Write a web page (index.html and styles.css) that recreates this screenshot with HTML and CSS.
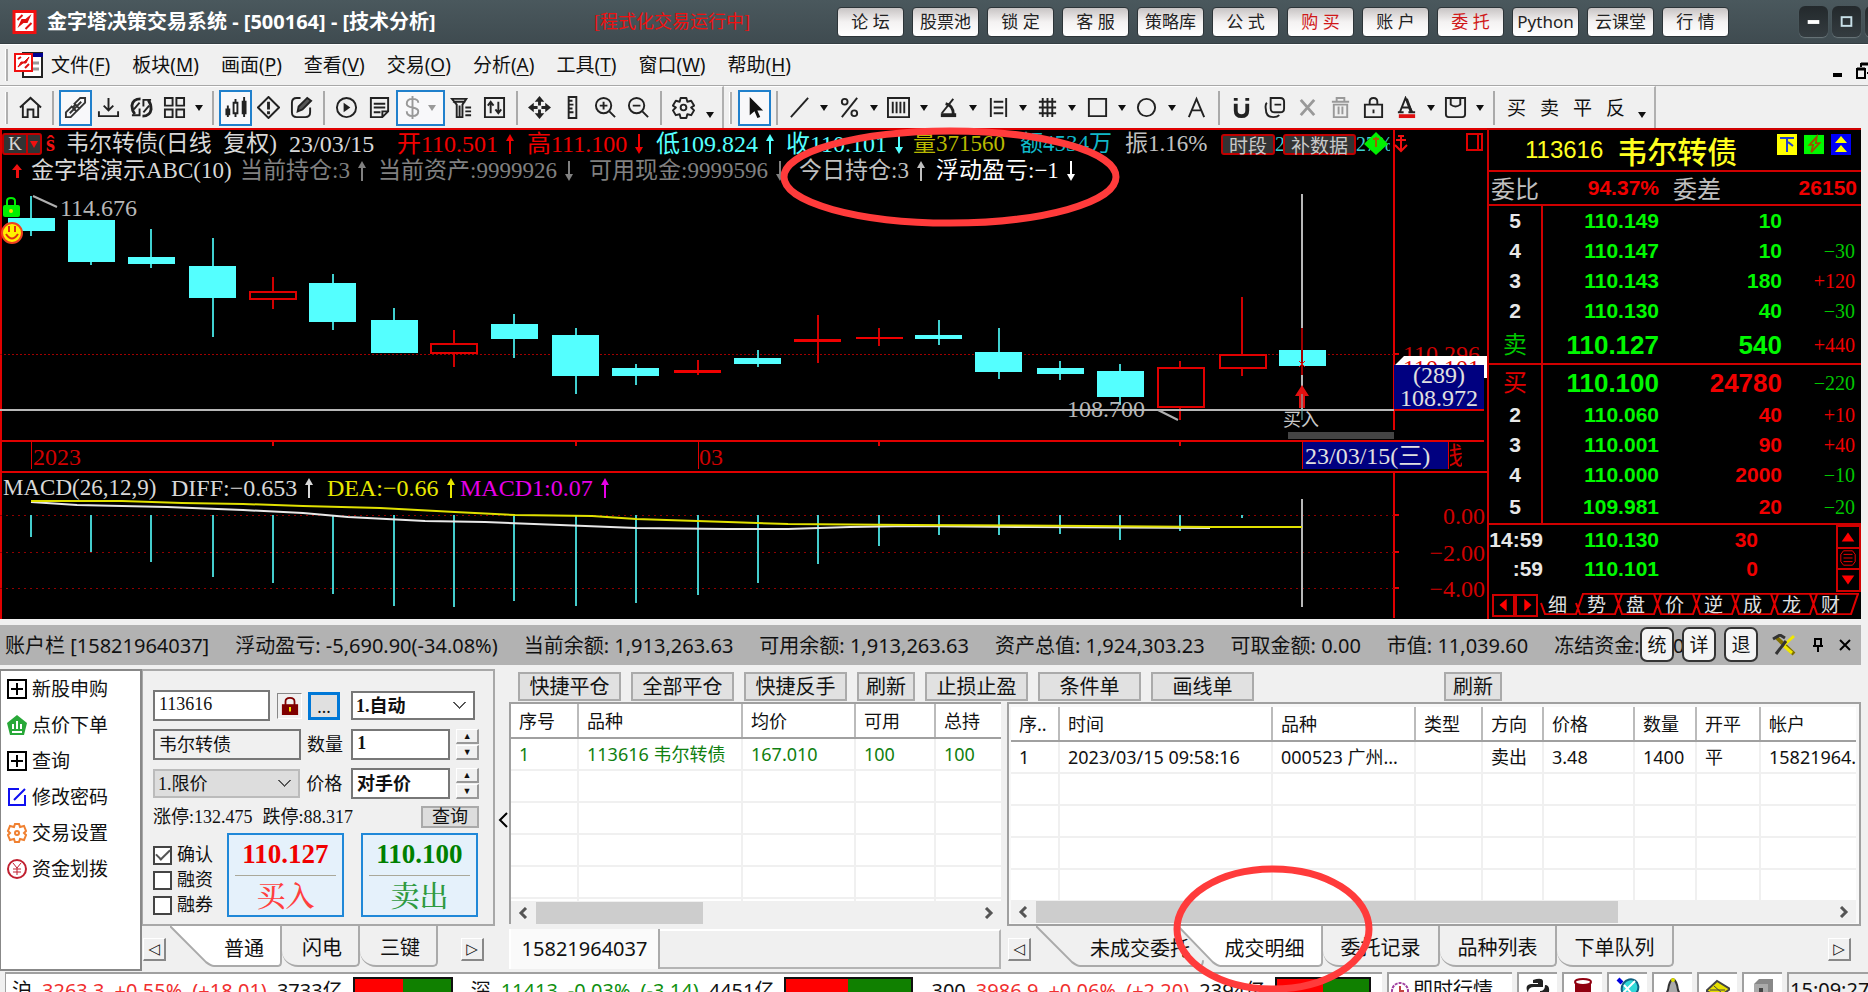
FILE: index.html
```html
<!DOCTYPE html>
<html lang="zh-CN">
<head>
<meta charset="utf-8">
<title>金字塔决策交易系统</title>
<link rel="stylesheet" href="styles.css">
</head>
<body>
<header class="titlebar">
  <svg class="logo" viewBox="0 0 24 24"><rect width="24" height="24" fill="#f01010"/><rect x="3" y="3" width="18" height="18" fill="#fff"/><path d="M5 18l4-9h4l6-5-4 9h-4z" fill="#e01010"/><path d="M5 10l5-5M13 19l6-6" stroke="#e01010" stroke-width="2"/></svg>
  <h1>金字塔决策交易系统 - [500164] - [技术分析]</h1>
  <span class="running">[程式化交易运行中]</span>
  <nav class="quick">
    <button>论 坛</button><button>股票池</button><button>锁 定</button><button>客 服</button><button>策略库</button><button>公 式</button><button class="hot">购 买</button><button>账 户</button><button class="hot">委 托</button><button>Python</button><button>云课堂</button><button>行 情</button>
  </nav>
  <div class="winctl">
    <button aria-label="最小化"><svg viewBox="0 0 30 30"><path d="M9 15h12" stroke="#fff" stroke-width="4"/></svg></button>
    <button aria-label="最大化"><svg viewBox="0 0 30 30"><rect x="10" y="10" width="10" height="9" fill="none" stroke="#c8e0e8" stroke-width="2"/></svg></button>
    <button aria-label="关闭"></button>
  </div>
</header>

<nav class="menubar">
  <i class="grip"></i>
  <svg class="docicon" viewBox="0 0 30 28"><rect x="9" y="2" width="19" height="24" fill="#fff" stroke="#222" stroke-width="2"/><path d="M8 2h21v4H8z" fill="#000090"/><path d="M19 12h6m-6 6h6" stroke="#999" stroke-width="3"/><rect x="1" y="3" width="17" height="17" fill="#fff" stroke="#f01010" stroke-width="2"/><path d="M4 16l3-5h3l5-5-3 6H9z" fill="#e01010" stroke="#e01010"/><path d="M4 8l3-2M11 17l4-4" stroke="#e01010" stroke-width="2"/></svg>
  <a href="#">文件(<u>F</u>)</a><a href="#">板块(<u>M</u>)</a><a href="#">画面(<u>P</u>)</a><a href="#">查看(<u>V</u>)</a><a href="#">交易(<u>O</u>)</a><a href="#">分析(<u>A</u>)</a><a href="#">工具(<u>T</u>)</a><a href="#">窗口(<u>W</u>)</a><a href="#">帮助(<u>H</u>)</a>
  <svg class="mdi" viewBox="0 0 36 20"><path d="M1 14h9" stroke="#000" stroke-width="4"/><g fill="none" stroke="#000" stroke-width="2"><path d="M29 6V3h8v9h-2M25 8h8v9h-8z"/><path d="M29 3h8M25 8h8" stroke-width="3"/></g></svg>
</nav>

<div class="toolbar">
  <div class="tgroup">
    <i class="grip"></i>
    <button aria-label="主页"><svg viewBox="0 0 24 24"><path d="M1 12L12 2l11 10M4 10v12h5v-8h6v8h5V10"/></svg></button>
    <i class="sep"></i>
    <button class="on" aria-label="连接"><svg viewBox="0 0 24 24"><path d="M2 22v-5l6-6 5 5-6 6zM11 8l6-6h5v5l-6 6zM6 18L18 6M9 12l3-3 4 4-3 3" stroke="#333"/></svg></button>
    <button aria-label="下载"><svg viewBox="0 0 24 24"><path d="M12 2v13M7 10l5 5 5-5M2 16v5h20v-5"/></svg></button>
    <button aria-label="刷新"><svg viewBox="0 0 24 24"><path d="M11 3Q3 3 2 10q0 5 3 9M13 21q8 0 9-7 0-6-3-10" stroke-width="3"/><path d="M2 20h8v-7M22 4h-8v7M10 7L4 14M14 17l6-7"/></svg></button>
    <button aria-label="布局"><svg viewBox="0 0 24 24"><path d="M2 2h8v8H2zM14 2h8v8h-8zM2 14h8v8H2zM14 14h8v8h-8z"/></svg></button>
    <i class="caret"></i>
    <i class="sep"></i>
    <button class="on" aria-label="K线"><svg viewBox="0 0 24 24"><path d="M4 10v12M12 3v19M21 1v21"/><path d="M4 13v7M21 5v14" stroke-width="5"/><path d="M10 7h4v11h-4z" fill="#fff"/></svg></button>
    <button aria-label="预警"><svg viewBox="0 0 24 24"><path d="M12 1l11 11-11 11L1 12z"/><path d="M12 6v8M12 16v3" stroke-width="3"/></svg></button>
    <button aria-label="编辑"><svg viewBox="0 0 24 24"><path d="M11 2H7Q2 2 2 7v10q0 5 5 5h9q5 0 5-5v-5"/><path d="M8 16l1-5 9-9 4 3-9 9z" fill="#555" stroke-width="2"/></svg></button>
    <i class="sep"></i>
    <button aria-label="播放"><svg viewBox="0 0 24 24"><circle cx="12" cy="12" r="10"/><path d="M9 7l7 5-7 5z" fill="#222" stroke="none"/></svg></button>
    <button aria-label="笔记"><svg viewBox="0 0 24 24"><path d="M3 2h18v14l-6 6H3zM21 16h-6v6M6 8h12M6 12h12M6 17h7"/></svg></button>
    <button class="on wide" aria-label="资金"><svg viewBox="0 0 24 24"><path d="M18 7q0-4-6-4T6 8q0 3 6 4t6 4q0 5-6 5t-6-5M12 0v24" stroke="#999"/></svg><i class="caret dim"></i></button>
    <button aria-label="筛选"><svg viewBox="0 0 24 24"><path d="M2 3h15l-4 6v13H7V9zM3 6h13M10 10v11M16 12h6M16 16h6M16 20h6"/></svg></button>
    <button aria-label="排序"><svg viewBox="0 0 24 24"><path d="M2 2h20v20H2zM8 18V7M5 10l3-4 3 4M16 6v11M13 14l3 4 3-4"/></svg></button>
    <i class="sep"></i>
    <button aria-label="移动"><svg viewBox="0 0 24 24"><path d="M12 0l5 6H7zM12 24l5-6H7zM0 12l6-5v10zM24 12l-6-5v10z" fill="#222" stroke="none"/><path d="M12 5v5M12 14v5M5 12h5M14 12h5" stroke-width="3"/></svg></button>
    <button aria-label="标尺"><svg viewBox="0 0 24 24"><path d="M8 1h8v22H8zM8 5h4M8 9h5M8 13h4M8 17h5"/></svg></button>
    <button aria-label="放大"><svg viewBox="0 0 24 24"><circle cx="10" cy="10" r="8"/><path d="M6 10h8M10 6v8M16 16l6 6"/></svg></button>
    <button aria-label="缩小"><svg viewBox="0 0 24 24"><circle cx="10" cy="10" r="8"/><path d="M6 10h8M16 16l6 6"/></svg></button>
    <i class="sep"></i>
    <button aria-label="设置"><svg viewBox="0 0 24 24"><path d="M9 2h6l1 4 4-1 3 5-3 2 3 3-3 5-4-1-1 4H9l-1-4-4 1-3-5 3-3-3-2 3-5 4 1z" stroke-linejoin="round"/><circle cx="12" cy="12" r="3"/></svg></button>
    <i class="caret low"></i>
  </div>
  <div class="tgroup">
    <i class="grip"></i>
    <button class="on" aria-label="选择"><svg viewBox="0 0 24 24"><path d="M7 1v19l5-4 3 7 3-1-3-7h6z" fill="#111" stroke="none"/></svg></button>
    <i class="sep"></i>
    <div class="draw">
      <button aria-label="直线"><svg viewBox="0 0 24 24"><path d="M3 22L21 2"/></svg></button><i class="caret"></i>
      <button aria-label="百分比"><svg viewBox="0 0 24 24"><path d="M4 22L20 2"/><circle cx="7" cy="6" r="3"/><circle cx="17" cy="18" r="3"/></svg></button><i class="caret"></i>
      <button aria-label="区间"><svg viewBox="0 0 24 24"><path d="M1 2h22v20H1zM6 6v12M10 6v12M14 6v12M18 6v12"/></svg></button><i class="caret"></i>
      <button aria-label="角度"><svg viewBox="0 0 24 24"><path d="M5 18L17 3" /><path d="M4 20h16" stroke-width="4"/><path d="M9 8q8 2 8 11" stroke-width="3"/></svg></button><i class="caret"></i>
      <button aria-label="通道"><svg viewBox="0 0 24 24"><path d="M4 2v20M20 2v20M7 6h10M7 12h10M7 18h10"/></svg></button><i class="caret"></i>
      <button aria-label="网格"><svg viewBox="0 0 24 24"><path d="M7 2v20M12 2v20M17 2v20M3 6h18M3 12h18M3 18h18"/></svg></button><i class="caret"></i>
      <button aria-label="矩形"><svg viewBox="0 0 24 24"><path d="M3 3h18v18H3z"/></svg></button><i class="caret"></i>
      <button aria-label="圆形"><svg viewBox="0 0 24 24"><circle cx="12" cy="12" r="9"/></svg></button><i class="caret"></i>
      <button aria-label="文字"><svg viewBox="0 0 24 24"><path d="M4 22L12 3l8 19M7 15h10"/></svg></button>
    </div>
    <i class="sep"></i>
    <button aria-label="磁铁"><svg viewBox="0 0 24 24"><path d="M6 8v7q0 6 6 6t6-6V8M6 2v3M18 2v3" stroke-width="4"/></svg></button>
    <button aria-label="复制"><svg viewBox="0 0 24 24"><path d="M8 2h10q4 0 4 4v7q0 4-4 4h-6q-4 0-4-4zM4 7Q2 9 3 14q0 8 8 8 4 0 6-2M12 9h7"/></svg></button>
    <button aria-label="删除"><svg viewBox="0 0 24 24"><path d="M5 4l14 16M19 4L5 20" stroke="#999" stroke-width="3"/></svg></button>
    <button aria-label="清空"><svg viewBox="0 0 24 24"><path d="M3 6h18M8 5V2h8v3M5 9h14v13H5zM10 11v8M14 11v8" stroke="#999"/></svg></button>
    <button aria-label="锁定"><svg viewBox="0 0 24 24"><path d="M3 9h18v13H3zM8 9V6q0-4 4-4t4 4v3M12 14v4"/></svg></button>
    <button aria-label="字体颜色"><svg viewBox="0 0 24 24"><path d="M5 17L11 2l7 15M7 12h8M3 17h6M14 17h7" /><path d="M12 3l5 14" stroke-width="3"/><path d="M4 21h17" stroke="#e01010" stroke-width="4"/></svg></button>
    <i class="caret"></i>
    <button aria-label="保存"><svg viewBox="0 0 24 24"><path d="M2 2h20v17q0 3-3 3H5q-3 0-3-3zM7 2v7q5 4 10 0V2"/></svg></button>
    <i class="caret"></i>
    <i class="sep"></i>
    <button>买</button><button>卖</button><button>平</button><button>反</button>
    <i class="caret low"></i>
  </div>
</div>

<main class="work">
  <section class="chart">
    <svg class="plot" height="491">
      <g transform="translate(0 -128)" shape-rendering="crispEdges">
        <path d="M0 129h1488M1 129v490M0 441h1484M0 472h1488" stroke="#e00000" stroke-width="2" fill="none"/>
        <path d="M1394 129v301M1394 472v146" stroke="#e00000" stroke-width="2"/>
        <path d="M0 354h1394" stroke="#a00000" stroke-width="1" stroke-dasharray="2 2"/>
        <path d="M0 515h1394M0 552h1394M0 588h1394" stroke="#900000" stroke-width="1" stroke-dasharray="2 4"/>
        <path d="M1394 515h5M1394 552h5M1394 588h5M1394 354h5M273 441v5M576 441v5M879 441v5M1180 441v5" stroke="#e00000" stroke-width="2"/>
        <path d="M31 441v28M698 441v28M1302 441v28" stroke="#e00000" stroke-width="1"/>
        <path d="M31 196v40M91 220v45M151 229v39M213 238v99M333 274v56M394 308v45M514 314v44M576 328v66M636 364v21M758 350v17M939 320v25M999 328v51M1060 361v19M1120 364v41" stroke="#40d0d0" stroke-width="2"/>
        <path d="M273 277v14m0 8v10M454 330v13m0 10v14M698 360v15M818 315v48M879 328v18M1180 361v6m0 40v13M1242 297v57m0 15v7" stroke="#d00000" stroke-width="2"/>
        <path d="M8 218h47v13H8zM68 220h47v42H68zM128 257h47v7h-47zM189 266h47v32h-47zM309 283h47v39h-47zM371 320h47v33h-47zM491 324h47v15h-47zM552 335h47v41h-47zM612 368h47v8h-47zM734 358h47v6h-47zM915 335h47v4h-47zM975 352h47v20h-47zM1037 368h47v6h-47zM1097 371h47v26h-47zM1279 350h47v16h-47z" fill="#54ffff"/>
        <path d="M674 370h47v3h-47zM794 339h47v3h-47zM856 337h47v2h-47z" fill="#f00000"/>
        <path d="M250 292h46v7h-46zM431 344h46v9h-46zM1158 368h46v39h-46zM1220 355h46v13h-46z" fill="none" stroke="#e00000" stroke-width="2"/>
        <path d="M0 410h1394" stroke="#b8b8b8" stroke-width="2"/>
        <path d="M1302 194v216M1302 499v108" stroke="#b8b8b8" stroke-width="2"/>
        <path d="M1302 328v47" stroke="#a00000" stroke-width="2"/>
        <path d="M31 515v22M91 515v37M151 515v47M213 515v62M273 515v68M333 515v79M394 515v91M454 515v92M514 515v86M576 515v91M636 515v88M698 515v80M758 515v68M818 515v49M879 515v31M939 515v20M999 515v20M1060 515v19M1120 515v25M1180 515v16M1242 515v3" stroke="#44cccc" stroke-width="2"/>
        <rect x="1288" y="432" width="106" height="7" fill="#444"/>
        <rect x="1303" y="442" width="145" height="27" fill="#000080"/>
        <path d="M1448 442v27" stroke="#e00000"/>
      </g>
      <g transform="translate(0 -128)">
        <path d="M31 502L77 505 167 507 243 510 303 513 348 517 425 521 485 522 560 525 636 528 728 529 788 529 850 527 910 526 1030 527 1210 528" fill="none" stroke="#e8e8e8" stroke-width="2"/>
        <path d="M31 501H122L182 503 243 504 303 506 380 508 455 512 515 515 592 516 636 519 728 522 788 524 910 525 1090 526 1211 527H1302" fill="none" stroke="#e0e000" stroke-width="2"/>
        <path d="M33 196l24 11M1158 410l20 10" stroke="#b0b0b0" stroke-width="2"/>
        <path d="M1302 385l7 11h-4v12h-6v-12h-4z" fill="#e01010"/><path d="M1302 394v26" stroke="#70c8c8" stroke-width="1"/>
        <path d="M1299 361l6 6m0-6l-6 6" stroke="#e01010"/>
        <rect x="3" y="205" width="17" height="12" rx="2" fill="#00f000"/><path d="M7 206v-5q0-3 4-3t4 3v5" fill="none" stroke="#00f000" stroke-width="2"/><circle cx="11" cy="211" r="2" fill="#f0e000"/>
        <circle cx="12" cy="233" r="10" fill="#fff000" stroke="#f04020" stroke-width="2"/><path d="M9 226v6M15 226v6M6 234q6 9 12 0" fill="none" stroke="#e03010" stroke-width="2"/>
        <g class="svgtext">
          <text x="60" y="216" fill="#b8b8b8">114.676</text>
          <text x="1067" y="417" fill="#b8b8b8">108.700</text>
          <text x="33" y="465" fill="#d00000">2023</text>
          <text x="699" y="465" fill="#d00000">03</text>
          <text x="1485" y="524" text-anchor="end" fill="#d00000">0.00</text>
          <text x="1485" y="561" text-anchor="end" fill="#d00000">−2.00</text>
          <text x="1485" y="597" text-anchor="end" fill="#d00000">−4.00</text>
          <text x="1403" y="362" fill="#d00000">110.296</text>
        </g>
        <path d="M1394 366l10-10h84v22h-4v-12z" fill="#fff"/>
        <svg x="1394" y="356" width="94" height="9"><text class="axis" x="9" y="20" fill="#e00000">110.101</text></svg>
        <rect x="1394" y="365" width="90" height="44" fill="#000080"/>
        <path d="M1394 410h90" stroke="#e00000" stroke-width="2"/>
        <g class="svgtext">
          <text x="1439" y="383" text-anchor="middle" fill="#e0e0e0">(289)</text>
          <text x="1439" y="406" text-anchor="middle" fill="#e0e0e0">108.972</text>
          <text x="1305" y="464" fill="#e0e0e0">23/03/15(三)</text>
        </g>
        <text class="tag" x="1283" y="426" fill="#c8c8c8">买入</text>
        <svg x="1450" y="442" width="12" height="28"><text class="axis" x="-11" y="22" fill="#d00000">线</text></svg>
        <path d="M1467 134h15v16h-15zM1478 134v16" fill="none" stroke="#e00000" stroke-width="2"/>
      </g>
    </svg>
    <div class="line one">
      <span class="kbox"><b>K</b><i></i></span><span class="scale">ŝ</span>
      <span>韦尔转债(日线&nbsp; 复权)</span><span class="n">23/03/15</span>
      <span class="n r">开110.501<svg class="ar"><use href="#up"/></svg></span>
      <span class="n r">高111.100<svg class="ar"><use href="#dn"/></svg></span>
      <span class="n c">低109.824<svg class="ar"><use href="#up"/></svg></span>
      <span class="n c">收110.101<svg class="ar"><use href="#dn"/></svg></span>
      <span class="y">量371560</span><span class="t">额4534万</span><span class="g">振1.16%</span>
      <span class="btns"><button>时段</button><small>2</small><button>补数据</button><small>27%</small></span>
    </div>
    <div class="line two">
      <svg class="redup" viewBox="0 0 12 16"><path d="M6 1l5 6H8v8H5V7H1z" fill="#f01010"/></svg>
      <span>金字塔演示ABC(10)</span>
      <span class="d">当前持仓:3<svg class="ar"><use href="#up"/></svg></span>
      <span class="d">当前资产:9999926<svg class="ar"><use href="#dn"/></svg></span>
      <span class="d">可用现金:9999596<svg class="ar"><use href="#dn"/></svg></span>
      <span class="g">今日持仓:3<svg class="ar"><use href="#up"/></svg></span>
      <span class="w">浮动盈亏:−1<svg class="ar"><use href="#dn"/></svg></span>
    </div>
    <div class="line three">
      <span>MACD(26,12,9)</span>
      <span class="n">DIFF:−0.653<svg class="ar"><use href="#up"/></svg></span>
      <span class="n yy">DEA:−0.66<svg class="ar"><use href="#up"/></svg></span>
      <span class="n m">MACD1:0.07<svg class="ar"><use href="#up"/></svg></span>
    </div>
    <svg class="marks" viewBox="0 0 50 24"><path d="M15 1l12 12-12 11L3 13z" fill="#00f000"/><path d="M15 6v10M12 8h6" stroke="#a06000" stroke-width="2"/><path d="M40 5v14M34 14l6 6 6-6M35 9h10M37 5h6" fill="none" stroke="#f01010" stroke-width="2"/></svg>
    <svg class="defs"><defs>
      <symbol id="up" viewBox="0 0 9 20"><path d="M5 3v17" stroke="currentColor" stroke-width="2"/><path d="M5 0l4 7H1z" fill="currentColor"/></symbol>
      <symbol id="dn" viewBox="0 0 9 20"><path d="M5 0v17" stroke="currentColor" stroke-width="2"/><path d="M5 20l4-7H1z" fill="currentColor"/></symbol>
    </defs></svg>
  </section>

  <section class="quote">
    <div class="qhead"><span class="code">113616</span><span class="name">韦尔转债</span>
      <span class="flags"><svg viewBox="0 0 20 21"><rect width="20" height="21" fill="#ff0"/><path d="M3 4h14M10 4v14M11 8l5 4" stroke="#2040d0" stroke-width="2"/></svg><svg viewBox="0 0 22 21"><rect width="22" height="21" fill="#00f800"/><path d="M14 2L6 11h4l-2 8 9-10h-4z" fill="none" stroke="#a05000" stroke-width="2"/></svg><svg viewBox="0 0 20 21"><rect width="20" height="21" fill="#0000f8"/><path d="M10 2l6 7H4zM10 11l6 7H4z" fill="#ff0"/></svg></span>
    </div>
    <div class="qratio"><span>委比</span><b>94.37%</b><span>委差</span><b>26150</b></div>
    <table class="book">
      <tr><th>5</th><td>110.149</td><td>10</td><td></td></tr>
      <tr><th>4</th><td>110.147</td><td>10</td><td>−30</td></tr>
      <tr><th>3</th><td>110.143</td><td>180</td><td class="r">+120</td></tr>
      <tr><th>2</th><td>110.130</td><td>40</td><td>−30</td></tr>
      <tr class="big ask"><th>卖</th><td>110.127</td><td>540</td><td class="r">+440</td></tr>
      <tr class="big bid"><th>买</th><td>110.100</td><td class="r">24780</td><td>−220</td></tr>
      <tr><th>2</th><td>110.060</td><td class="r">40</td><td class="r">+10</td></tr>
      <tr><th>3</th><td>110.001</td><td class="r">90</td><td class="r">+40</td></tr>
      <tr><th>4</th><td>110.000</td><td class="r">2000</td><td>−10</td></tr>
      <tr class="last"><th>5</th><td>109.981</td><td class="r">20</td><td>−20</td></tr>
    </table>
    <div class="ticks">
      <table><tr><th>14:59</th><td>110.130</td><td class="r">30</td></tr><tr><th>:59</th><td>110.101</td><td class="r">0</td></tr></table>
      <div class="vscroll"><button aria-label="上"><svg viewBox="0 0 22 20"><path d="M11 5l7 10H4z"/></svg></button><button aria-label="滑块"><svg viewBox="0 0 22 20"><path d="M6 6h10M6 10h10M6 14h10M3 6l3-4h10l3 4v8l-3 4H6l-3-4z" fill="none" stroke="#f00" stroke-width="1"/></svg></button><button aria-label="下"><svg viewBox="0 0 22 20"><path d="M11 15l7-10H4z"/></svg></button></div>
    </div>
    <div class="qtabs">
      <svg class="zig" viewBox="0 0 320 26" preserveAspectRatio="none"><path d="M2 12l4 12h31l7-22h276M37 12l4 12h35l7-22M76 2l7 22h32l7-22M115 2l7 22h32l7-22M154 2l7 22h32l7-22M193 2l7 22h32l7-22M232 2l7 22h32l7-22M271 2l7 22h34l7-22" fill="none" stroke="#e00000" stroke-width="2"/></svg>
      <span class="arrows"><button aria-label="左移"><svg viewBox="0 0 20 20"><path d="M13 3v14l-8-7z"/></svg></button><button aria-label="右移"><svg viewBox="0 0 20 20"><path d="M7 3v14l8-7z"/></svg></button></span>
      <a href="#">细</a><a href="#">势</a><a href="#">盘</a><a href="#">价</a><a href="#">逆</a><a href="#">成</a><a href="#">龙</a><a href="#">财</a>
    </div>
  </section>
  <svg class="ring first" viewBox="0 0 341 101"><ellipse cx="170" cy="50" rx="166" ry="46"/></svg>
</main>

<section class="account">
  <span>账户栏 [15821964037]</span><span>浮动盈亏: -5,690.90(-34.08%)</span><span>当前余额: 1,913,263.63</span><span>可用余额: 1,913,263.63</span><span>资产总值: 1,924,303.23</span><span>可取金额: 0.00</span><span>市值: 11,039.60</span><span class="frozen">冻结资金: 0.00</span>
  <div class="abtns"><button>统</button><button>详</button><button>退</button>
    <svg class="tools" viewBox="0 0 26 22"><path d="M4 3L22 20" stroke="#807000" stroke-width="4"/><path d="M12 11L22 2M12 12l8 7" stroke="#f0e800" stroke-width="3"/><path d="M1 5l7-4 5 3M4 20L14 7" stroke="#333" stroke-width="3" fill="none"/></svg>
    <svg class="pin" viewBox="0 0 12 16"><path d="M3 2h6v7H3zM1 9h10M6 9v6" fill="none" stroke="#000" stroke-width="2"/></svg>
    <svg class="close" viewBox="0 0 14 14"><path d="M2 2l10 10M12 2L2 12" stroke="#000" stroke-width="2"/></svg>
  </div>
</section>

<section class="trade">
  <ul class="tree">
    <li><svg viewBox="0 0 20 20"><path d="M1 1h18v18H1zM4 10h12M10 4v12" fill="none" stroke="#000" stroke-width="2"/></svg>新股申购</li>
    <li><svg viewBox="0 0 20 20"><path d="M10 0l10 8-3 12H3L0 8z" fill="#28a838"/><path d="M6 9v5M10 6v8M14 9v5M5 17h10" stroke="#fff" stroke-width="2"/></svg>点价下单</li>
    <li><svg viewBox="0 0 20 20"><path d="M1 1h18v18H1zM4 10h12M10 4v12" fill="none" stroke="#000" stroke-width="2"/></svg>查询</li>
    <li><svg viewBox="0 0 20 20"><path d="M12 2H2v16h16V8M7 13L18 2" fill="none" stroke="#1010f0" stroke-width="2"/></svg>修改密码</li>
    <li><svg viewBox="0 0 20 20"><path d="M8 1h4l1 3 4-1 2 5-2 2 2 2-2 5-4-1-1 3H8l-1-3-4 1-2-5 2-2-2-2 2-5 4 1z" fill="none" stroke="#f08030" stroke-width="2"/><circle cx="10" cy="10" r="2" fill="none" stroke="#f08030" stroke-width="2"/></svg>交易设置</li>
    <li><svg viewBox="0 0 20 20"><g fill="none" stroke="#c02030"><circle cx="10" cy="10" r="9" stroke-width="2"/><path d="M6 4l4 5 4-5M10 9v7M6 10h8M6 13h8"/></g></svg>资金划拨</li>
  </ul>

  <div class="entry">
    <form class="form" onsubmit="return false">
      <div class="frow"><input class="code" value="113616" aria-label="代码"><button class="lock" aria-label="锁定"><svg viewBox="0 0 20 22"><path d="M5 10V6q0-4 5-4t5 4v4" fill="none" stroke="#800000" stroke-width="2"/><rect x="1" y="9" width="18" height="12" fill="#800000"/><path d="M10 12v5" stroke="#ff0" stroke-width="2"/></svg></button><button class="dots">...</button><select class="auto bold" aria-label="开平"><option>1.自动</option></select></div>
      <div class="frow"><input class="name" value="韦尔转债" readonly aria-label="名称"><label for="qty">数量</label><input id="qty" class="qty bold" value="1"><span class="spin"><button aria-label="增加">▲</button><button aria-label="减少">▼</button></span></div>
      <div class="frow"><select class="kind" aria-label="方式"><option>1.限价</option></select><label for="price">价格</label><input id="price" class="qty bold" value="对手价"><span class="spin"><button aria-label="提高">▲</button><button aria-label="降低">▼</button></span></div>
      <div class="frow limit"><span>涨停:132.475</span><span>跌停:88.317</span><button>查询</button></div>
      <div class="act">
        <div class="checks"><label><input type="checkbox" checked>确认</label><label><input type="checkbox">融资</label><label><input type="checkbox">融券</label></div>
        <button class="order buy"><b>110.127</b><span>买入</span></button>
        <button class="order sell"><b>110.100</b><span>卖出</span></button>
      </div>
    </form>
    <div class="tabs left">
      <button class="nav">◁</button>
      <button class="tab cur slant"><svg viewBox="0 0 112 42" preserveAspectRatio="none"><path d="M0 0l36 37q5 4 8 4h64q3 0 3-4V0"/></svg><span>普通</span></button><button class="tab"><span>闪电</span></button><button class="tab"><span>三键</span></button>
      <button class="nav end">▷</button>
    </div>
  </div>

  <button class="fold" aria-label="收起"><svg viewBox="0 0 10 16"><path d="M9 1L2 8l7 7" fill="none" stroke="#000" stroke-width="2"/></svg></button>

  <div class="lists">
    <div class="cmds"><button>快捷平仓</button><button>全部平仓</button><button>快捷反手</button><button class="s">刷新</button><button>止损止盈</button><button>条件单</button><button>画线单</button><button class="s far">刷新</button></div>
    <div class="pair">
      <div class="hold">
        <div class="grid">
          <div class="clip"><table class="t1">
            <thead><tr><th>序号</th><th>品种</th><th>均价</th><th>可用</th><th>总持</th></tr></thead>
            <tbody><tr class="pos"><td>1</td><td>113616 韦尔转债</td><td>167.010</td><td>100</td><td>100</td></tr>
            <tr><td></td><td></td><td></td><td></td><td></td></tr><tr><td></td><td></td><td></td><td></td><td></td></tr><tr><td></td><td></td><td></td><td></td><td></td></tr><tr><td></td><td></td><td></td><td></td><td></td></tr><tr><td></td><td></td><td></td><td></td><td></td></tr></tbody>
          </table></div>
          <div class="hbar"><svg viewBox="0 0 10 12"><path d="M8 1L3 6l5 5"/></svg><i class="th1"></i><svg class="end" viewBox="0 0 10 12"><path d="M2 1l5 5-5 5"/></svg></div>
        </div>
        <div class="acct"><button>15821964037</button><i></i></div>
      </div>
      <div class="deals">
        <div class="grid framed">
          <div class="clip"><table class="t2">
            <thead><tr><th>序..</th><th>时间</th><th>品种</th><th>类型</th><th>方向</th><th>价格</th><th>数量</th><th>开平</th><th>帐户</th></tr></thead>
            <tbody><tr><td>1</td><td>2023/03/15 09:58:16</td><td>000523 广州...</td><td></td><td>卖出</td><td>3.48</td><td>1400</td><td>平</td><td>15821964.</td></tr>
            <tr><td></td><td></td><td></td><td></td><td></td><td></td><td></td><td></td><td></td></tr><tr><td></td><td></td><td></td><td></td><td></td><td></td><td></td><td></td><td></td></tr><tr><td></td><td></td><td></td><td></td><td></td><td></td><td></td><td></td><td></td></tr><tr><td></td><td></td><td></td><td></td><td></td><td></td><td></td><td></td><td></td></tr></tbody>
          </table></div>
          <div class="hbar"><svg viewBox="0 0 10 12"><path d="M8 1L3 6l5 5"/></svg><i class="th2"></i><svg class="end" viewBox="0 0 10 12"><path d="M2 1l5 5-5 5"/></svg></div>
        </div>
        <div class="tabs right">
          <button class="nav">◁</button>
          <button class="tab slant first"><svg viewBox="0 0 168 42" preserveAspectRatio="none"><path d="M0 0l36 37q5 4 8 4h119q4 0 4-6"/></svg><span>未成交委托</span></button><button class="tab cur slant"><svg viewBox="0 0 150 42" preserveAspectRatio="none"><path d="M0 0l36 37q5 4 8 4h101q4 0 4-4V0"/></svg><span>成交明细</span></button><button class="tab"><span>委托记录</span></button><button class="tab"><span>品种列表</span></button><button class="tab"><span>下单队列</span></button>
          <button class="nav end">▷</button>
        </div>
      </div>
    </div>
  </div>
  <svg class="ring second" viewBox="0 0 200 128"><ellipse cx="100" cy="64" rx="96" ry="60"/></svg>
</section>

<footer class="status">
  <div class="idx">
    <span>沪</span><span class="r">3263.3</span><span class="r">+0.55%</span><span class="r">(+18.01)</span><span>3733亿</span><i class="ratio sh"></i>
    <span>深</span><span class="gr">11413</span><span class="gr">-0.03%</span><span class="gr">(-3.14)</span><span>4451亿</span><i class="ratio sz"></i>
    <span>300</span><span class="r">3986.9</span><span class="r">+0.06%</span><span class="r">(+2.20)</span><span>2394亿</span><i class="ratio hs"></i>
  </div>
  <div class="cell live"><svg viewBox="0 0 18 24"><circle cx="9" cy="14" r="8" fill="#fff" stroke="#a040a0" stroke-width="2" stroke-dasharray="3 1"/><path d="M9 9v5h4" fill="none" stroke="#c04040" stroke-width="2"/></svg>即时行情</div>
  <div class="cell"><svg viewBox="0 0 24 24"><path d="M7 3q9-3 10 1v6H8q-6 0-6 6-4-8 3-9h7V6H7z" fill="#222"/><path d="M19 8q5 0 4 7l-3 4h-6v-5q5 0 5-6z" fill="#222"/></svg></div>
  <div class="cell"><svg viewBox="0 0 24 24"><path d="M4 5v19h16V5z" fill="#900010"/><ellipse cx="12" cy="5" rx="8" ry="3" fill="#fff" stroke="#900010" stroke-width="2"/></svg></div>
  <div class="cell"><svg viewBox="0 0 24 24"><path d="M2 2l4 4" stroke="#0000e0" stroke-width="4"/><ellipse cx="14" cy="11" rx="8" ry="9" transform="rotate(35 14 11)" fill="#30d8d8" stroke="#106080" stroke-width="2"/><path d="M5 18L19 4M8 8l9 10" stroke="#fff" stroke-width="2"/></svg></div>
  <div class="cell"><svg viewBox="0 0 24 24"><path d="M12 2q4 2 5 11l4 9H3l4-9q1-9 5-11z" fill="#aaa" stroke="#333" stroke-width="2"/><circle cx="12" cy="3" r="2" fill="#dd0"/></svg></div>
  <div class="cell"><svg viewBox="0 0 24 24"><path d="M0 14L11 4l13 8-11 8z" fill="#e8e000" stroke="#444" stroke-width="2"/><path d="M4 13h15M8 9l8 7" stroke="#444"/></svg></div>
  <div class="cell"><svg viewBox="0 0 24 24"><path d="M3 7l5-5h14v20H3z" fill="#888"/><path d="M3 7h14v16H3z" fill="#aaa"/><path d="M8 11h4v4H8z" fill="#444"/></svg></div>
  <div class="cell clock">15:09:27</div>
</footer>
</body>
</html>
```

FILE: styles.css
```css
* { box-sizing: border-box; }
html, body { height: 100%; }
body {
  margin: 0; display: flex; flex-direction: column; overflow: hidden;
  background: #f0f0f0; color: #111;
  font: 20px/26px "Noto Sans", "Noto Sans CJK SC", sans-serif;
}
button, input, select { font: inherit; color: inherit; margin: 0; padding: 0; border-radius: 0; }
button { white-space: nowrap; }
a { color: inherit; text-decoration: none; }
svg { display: block; flex: none; }
i { display: block; flex: none; }
table { border-collapse: collapse; }

/* title bar */
.titlebar { display: flex; flex: none; height: 44px; align-items: center; padding-left: 12px; background: linear-gradient(#4a585d, #3f4b50); border-bottom: 1px solid #343e42; white-space: nowrap; }
.logo { width: 25px; height: 24px; margin-right: 10px; }
.titlebar h1 { margin: 0; width: 547px; font-size: 20px; font-weight: 700; color: #fff; }
.running { width: 243px; font-size: 18px; color: #f01010; font-family: "Liberation Serif", "Noto Sans CJK SC", serif; }
.quick { display: flex; gap: 8px; flex: none; }
.quick button { width: 67px; height: 30px; border: 1px solid #2c3438; border-radius: 4px; background: linear-gradient(#c8c4c4, #f4f2f2 50%, #fff); font-size: 17px; line-height: 24px; color: #222; }
.quick .hot { color: #d01818; }
.winctl { display: flex; gap: 4px; margin-left: auto; flex: none; margin-right: -26px; }
.winctl button { width: 29px; height: 31px; border: 0; border-radius: 6px; background: linear-gradient(#23292c, #343c40); box-shadow: 0 1px 1px #6b777b; }
.winctl svg { width: 29px; height: 30px; }

/* menu */
.menubar { display: flex; flex: none; align-items: center; height: 42px; border-bottom: 1px solid #a8a8a8; border-top: 1px solid #fff; font-size: 19px; padding-left: 5px; }
.grip { width: 3px; height: 32px; border-right: 2px solid #b0b0b0; border-left: 1px solid #fff; }
.docicon { width: 30px; height: 28px; margin: 0 7px 0 6px; }
.menubar a { margin-right: 22px; }
.menubar u { text-underline-offset: 3px; text-decoration-thickness: 1px; }
.mdi { width: 36px; height: 20px; margin-left: auto; margin-top: 12px; }

/* toolbar */
.toolbar { display: flex; flex: none; height: 42px; }
.tgroup { display: flex; align-items: center; padding: 0 3px 0 5px; border-right: 2px solid #b0b0b0; border-top: 1px solid #fff; }
.tgroup .grip { margin-right: 6px; }
.toolbar button { width: 33px; height: 36px; border: 0; background: none; display: flex; align-items: center; justify-content: center; font-size: 19px; flex: none; }
.toolbar button svg { width: 23px; height: 23px; fill: none; stroke: #222; stroke-width: 2; }
.toolbar .on { border: 2px solid #2080cc; background: #f8f8fa; }
.toolbar .wide { width: 49px; }
.sep { width: 12px; height: 34px; background: linear-gradient(90deg, #0000 5px, #aaa 5px, #aaa 7px, #0000 7px); }
.caret { width: 16px; height: 36px; display: flex; align-items: center; justify-content: center; }
.caret::after { content: ""; border: 4px solid transparent; border-top: 6px solid #111; border-bottom: 0; }
.dim::after { border-top-color: #999; }
.low { align-items: flex-end; padding-bottom: 8px; width: 19px; }
.draw { display: flex; width: 430px; justify-content: space-between; }

/* chart */
.work { position: relative; display: flex; flex: none; padding-right: 7px; }
.chart { position: relative; flex: 1; min-width: 0; background: #000; overflow: hidden; }
.plot { width: 100%; }
.svgtext, .axis { font: 24px "Liberation Serif", "Noto Sans CJK SC", serif; }
.tag { font: 18px "Noto Sans CJK SC", sans-serif; }
.line { position: absolute; left: 0; display: grid; align-items: center; white-space: nowrap; color: #d8d8d8; font: 23px/28px "Liberation Serif", "Noto Sans CJK SC", serif; }
.line span { display: flex; align-items: center; }
.line .n { font-size: 24px; }
.one { top: 2px; padding-left: 2px; grid-template-columns: 44px 20px 223px 108px 130px 129px 130px 127px 107px 105px 96px auto; }
.two { top: 29px; padding-left: 11px; grid-template-columns: 20px 209px 138px 211px 210px 137px 150px; }
.three { top: 346px; padding-left: 3px; grid-template-columns: 168px 156px 133px 140px; }
.ar { width: 9px; height: 20px; margin-left: 7px; }
.defs { width: 0; height: 0; position: absolute; }
.redup { width: 12px; height: 16px; }
.r { color: #f00000; }
.c { color: #54ffff; }
.y { color: #b8b800; }
.yy { color: #e8e800; }
.t { color: #10b8c8; }
.g { color: #c0c0c0; }
.d { color: #808080; }
.w { color: #fff; }
.m { color: #e800e8; }
.kbox { width: 40px; height: 22px; border: 2px solid #c00000; border-radius: 3px; background: #333; }
.kbox b { width: 24px; text-align: center; font-size: 19px; font-weight: 400; border-right: 2px solid #c00000; line-height: 18px; }
.kbox i { margin-left: 2px; border: 4px solid transparent; border-top: 7px solid #f01010; border-bottom: 0; }
.scale { color: #f01010; font-weight: 700; }
.btns button { height: 21px; padding: 0 6px; border: 2px solid #c00000; border-radius: 3px; background: #333; color: #c8c8c8; font: 19px/17px "Noto Sans CJK SC", sans-serif; }
.btns small { width: 8px; overflow: hidden; color: #40d0d0; font-size: 20px; }
.btns small:last-child { width: 34px; }
.marks { position: absolute; left: 1361px; top: 3px; width: 50px; height: 24px; }

/* rings */
.ring { position: absolute; fill: none; stroke: #ff3b3b; stroke-width: 7px; pointer-events: none; }
.first.ring { left: 780px; top: -1px; width: 341px; height: 101px; }
.second.ring { left: 1173px; top: 196px; width: 200px; height: 128px; z-index: 2; }

/* quote */
.quote { width: 374px; background: #000; border-left: 2px solid #d00000; border-top: 2px solid #d00000; display: flex; flex-direction: column; color: #e0e0e0; }
.qhead { display: flex; height: 42px; align-items: center; padding-left: 36px; color: #ffff20; border-bottom: 2px solid #d00000; white-space: nowrap; }
.qhead .code { font: 24px/30px "Liberation Sans", sans-serif; margin-right: 14px; }
.qhead .name { font: 500 30px/36px "Noto Sans CJK SC", sans-serif; }
.flags { display: flex; gap: 7px; margin-left: auto; padding-right: 10px; margin-bottom: 12px; }
.flags svg { width: 20px; height: 21px; }
.qratio { display: grid; grid-template-columns: 56px 112px 96px 102px; align-items: center; height: 34px; padding-left: 2px; border-bottom: 2px solid #d00000; }
.qratio span { font: 24px/30px "Noto Sans CJK SC", sans-serif; color: #c0c0c0; }
.qratio span + b + span { padding-left: 14px; }
.qratio b { font: 700 21px/30px "Liberation Sans", sans-serif; color: #f00000; text-align: right; }
.book { width: 100%; table-layout: fixed; }
.book tr { height: 30px; }
.book th, .book td, .ticks th, .ticks td { padding: 0; text-align: right; font: 700 21px/30px "Liberation Sans", "Noto Sans CJK SC", sans-serif; color: #00f800; }
.book th { width: 53px; text-align: center; color: #e8e8e8; border-right: 2px solid #d00000; }
.book td:nth-child(2) { width: 117px; }
.book td:nth-child(3) { width: 123px; }
.book td:nth-child(4) { font: 20px/30px "Liberation Serif", serif; color: #00c800; padding-right: 6px; }
.book td.r, .book td.r:nth-child(4), .ticks td.r { color: #f00000; }
.book .big { height: 38px; }
.book .big th { font-size: 24px; font-weight: 400; color: #00c800; }
.book .bid { height: 36px; }
.book .bid th { color: #e00000; }
.book .big td:nth-child(2), .book .big td:nth-child(3) { font-size: 26px; }
.book .ask { border-bottom: 2px solid #d00000; }
.book .last { height: 34px; border-bottom: 2px solid #d00000; }
.ticks { display: flex; height: 67px; align-items: flex-start; }
.ticks table { flex: 1; table-layout: fixed; }
.ticks th, .ticks td { line-height: 29px; }
.ticks th { width: 54px; color: #e8e8e8; }
.ticks td { width: 116px; }
.ticks td.r { width: auto; padding-right: 78px; }
.vscroll { width: 25px; height: 67px; display: grid; border: 1px solid #d00000; }
.vscroll button { border: 1px solid #d00000; background: #000; }
.vscroll svg, .arrows svg { width: 20px; height: 18px; fill: #f00; }
.qtabs { position: relative; display: flex; height: 26px; align-items: center; padding-left: 3px; }
.zig { position: absolute; left: 50px; top: 0; width: 320px; height: 24px; }
.arrows { display: flex; width: 46px; }
.arrows button { width: 23px; height: 23px; border: 2px solid #d00000; background: #000; }
.qtabs a { position: relative; width: 39px; text-align: center; font-size: 19px; line-height: 22px; }

/* account bar */
.account { position: relative; display: flex; gap: 26px; flex: none; align-items: center; height: 40px; margin: 6px 7px 0 0; padding: 2px 0 0 5px; background: #b2b2b2; white-space: nowrap; }
.abtns { position: absolute; right: 9px; top: 2px; display: flex; align-items: center; gap: 8px; }
.abtns button { width: 34px; height: 35px; border: 2px solid #333; border-radius: 7px; background: #f4f4f4; font-size: 19px; }
.abtns button:nth-child(3) { margin-right: 6px; }
.tools { width: 26px; height: 22px; margin-right: 6px; }
.pin { width: 12px; height: 16px; margin-right: 6px; }
.close { width: 14px; height: 14px; }

/* trade area */
.trade { position: relative; display: flex; flex: none; height: 302px; margin-top: 4px; padding-right: 7px; }
.tree { width: 142px; margin: 0; padding: 0 0 0 6px; list-style: none; background: #fff; border: 2px solid #888; border-left-width: 1px; font-size: 19px; }
.tree li { display: flex; align-items: center; gap: 5px; height: 36px; }
.tree svg { width: 20px; height: 20px; }
.entry { width: 353px; display: flex; flex-direction: column; }
.form { height: 257px; border: 2px solid #a8a8a8; border-left-width: 1px; padding: 19px 14px 0 10px; font: 18px/24px "Liberation Serif", "Noto Sans CJK SC", serif; }
.frow { display: flex; align-items: center; height: 31px; margin-bottom: 8px; }
.form input:not([type]) { height: 31px; border: 2px solid #777; background: #fff; padding: 0 4px 3px; }
.form .bold { font-weight: 700; }
.form input.code { width: 117px; margin-right: 7px; }
.lock { width: 25px; height: 26px; border: 1px solid #888; border-right-color: #fff; border-bottom-color: #fff; background: #f0f0f0; display: flex; align-items: center; justify-content: center; }
.lock svg { width: 18px; height: 20px; }
.dots { width: 32px; height: 28px; margin: 0 11px 0 6px; border: 3px solid #0078d7; background: #e0e0e0; }
.form select { height: 29px; border: 2px solid #777; padding-left: 3px; appearance: none; background-color: #fff; background-image: linear-gradient(45deg, #0000 45%, #555 45% 60%, #0000 60%), linear-gradient(-45deg, #0000 45%, #555 45% 60%, #0000 60%); background-size: 7px 7px; background-position: right 13px center, right 7px center; background-repeat: no-repeat; }
.auto { width: 124px; }
.form input.name { width: 148px; background: #f0f0f0; }
.frow label { width: 51px; padding-left: 6px; }
.form select.kind { width: 148px; background-color: #ddd; border-color: #bbb; }
.qty { width: 99px; margin-right: 6px; }
.spin { display: grid; width: 23px; gap: 1px; }
.spin button { height: 15px; border: 1px solid #fff; border-right: 2px solid #999; border-bottom: 2px solid #999; background: #f0f0f0; font-size: 9px; line-height: 10px; }
.limit { height: 24px; gap: 10px; margin: -2px 0 4px; }
.limit button { width: 58px; height: 22px; margin-left: auto; border: 2px solid #aaa; background: #ddd; line-height: 18px; }
.act { display: flex; gap: 17px; }
.checks { width: 57px; display: grid; align-content: space-between; padding-top: 10px; flex: none; }
.checks label { display: flex; align-items: center; gap: 5px; white-space: nowrap; line-height: 24px; }
.checks input { appearance: none; display: grid; place-items: center; flex: none; width: 19px; height: 19px; border: 2px solid #444; background: #fff; }
.checks input:checked::after { content: ""; width: 12px; height: 6px; margin-bottom: 4px; border: 2px solid #555; border-top: 0; border-right: 0; transform: rotate(-45deg); }
.order { width: 117px; height: 84px; border: 2px solid #2088d8; background: #e5f1fb; display: flex; flex-direction: column; align-items: center; flex: none; padding: 5px 6px 0; }
.order b { font-size: 27px; line-height: 28px; }
.order span { width: 100%; margin-top: 7px; border-top: 1px solid #aaa89a; font: 500 29px/38px "Noto Serif CJK SC", "Noto Sans CJK SC", serif; }
.buy b { color: #f00000; }
.buy span { color: #ff4040; }
.sell b { color: #008000; }
.sell span { color: #2f9a40; }

.tabs { display: flex; align-items: flex-start; height: 42px; padding-left: 1px; }
.nav { width: 23px; height: 23px; margin-top: 12px; border: 1px solid #fff; border-right: 2px solid #888; border-bottom: 2px solid #888; background: #f0f0f0; font-size: 15px; line-height: 18px; font-family: "DejaVu Sans", sans-serif; }
.nav.end { margin-left: auto; }
.tab { position: relative; height: 41px; padding: 4px 0 0; border: 0; border-right: 2px solid #aaa; border-bottom: 2px solid #aaa; border-radius: 0 0 5px 16px; background: #f0f0f0; }
.tab span { position: relative; }
.tab svg { position: absolute; left: 0; top: 0; width: 100%; height: 41px; fill: #f0f0f0; stroke: #aaa; stroke-width: 2; }
.tab.slant { border: 0; background: none; }
.tab.cur svg { fill: #fff; }
.left .tab { width: 78px; padding-left: 4px; }
.left .slant { width: 112px; margin-left: 4px; padding-left: 36px; }
.left .end { margin-right: 11px; }
.fold { width: 16px; border: 0; background: none; display: flex; align-items: center; justify-content: center; }
.fold svg { width: 10px; height: 16px; }

.lists { flex: 1; min-width: 0; display: flex; flex-direction: column; margin-left: -2px; }
.cmds { display: flex; gap: 10px; padding: 3px 0 0 9px; height: 33px; }
.cmds button { width: 103px; height: 29px; border: 2px solid #aaa; background: #e1e1e1; line-height: 22px; }
.cmds .s { width: 58px; }
.cmds .far { margin-left: 180px; }
.pair { flex: 1; display: grid; grid-template-columns: 492px minmax(0, 1fr); gap: 6px; min-height: 0; }
.hold, .deals { display: flex; flex-direction: column; min-width: 0; }
.grid { display: flex; flex-direction: column; height: 222px; border-top: 2px solid #a0a0a0; border-left: 2px solid #a0a0a0; background: #fff; }
.grid.framed { height: 224px; border: 2px solid #a0a0a0; padding: 3px 3px 1px 2px; background: #f8f8f8; }
.clip { flex: 1; overflow: hidden; background: #fff; }
.clip table { width: 100%; table-layout: fixed; font-size: 18px; line-height: 24px; }
.clip th, .clip td { height: 32px; padding: 0 0 0 8px; text-align: left; font-weight: 400; white-space: nowrap; overflow: hidden; border-right: 2px solid #f0f0f0; border-bottom: 2px solid #f0f0f0; }
.clip th { height: 34px; border-right-color: #bbb; border-bottom-color: #a0a0a0; }
.clip th:last-child, .clip td:last-child { border-right: 0; }
.pos { color: #108010; }
.t1 th:nth-child(1) { width: 67px; }
.t1 th:nth-child(2) { width: 164px; }
.t1 th:nth-child(3) { width: 113px; }
.t1 th:nth-child(4) { width: 80px; }
.t2 th:nth-child(1) { width: 48px; }
.t2 th:nth-child(2) { width: 213px; }
.t2 th:nth-child(3) { width: 143px; }
.t2 th:nth-child(4) { width: 67px; }
.t2 th:nth-child(5) { width: 61px; }
.t2 th:nth-child(6) { width: 91px; }
.t2 th:nth-child(7) { width: 62px; }
.t2 th:nth-child(8) { width: 64px; }
.hbar { display: flex; align-items: center; height: 23px; flex: none; background: #f0f0f0; padding: 0 7px; }
.hbar svg { width: 10px; height: 12px; fill: none; stroke: #555; stroke-width: 3; }
.hbar i { height: 22px; margin-left: 8px; background: #cdcdcd; }
.th1 { width: 35%; }
.th2 { width: 70%; }
.hbar .end { margin-left: auto; }
.acct { display: flex; height: 40px; margin-top: 5px; }
.acct button { width: 151px; border: 0; border-left: 2px solid #fff; border-right: 2px solid #aaa; background: #fafafa; }
.acct i { flex: 1; border: 2px solid #b4b4b4; border-left: 0; border-top-color: #fff; }
.right .tab { width: 117px; }
.right .slant { width: 145px; margin-left: -26px; padding-left: 28px; z-index: 1; }
.right .slant.first { width: 168px; margin-left: 5px; padding-left: 54px; z-index: 0; text-align: left; }
.right .end { margin-right: 10px; }

/* status */
.status { display: flex; gap: 5px; flex: none; height: 36px; margin: 1px 0 0 5px; white-space: nowrap; }
.idx, .cell { display: flex; align-items: center; height: 36px; border-top: 2px solid #a0a0a0; border-left: 2px solid #a0a0a0; background: #fff; }
.idx { width: 1377px; padding-left: 6px; gap: 10px; border-left-width: 1px; }
.idx .r { color: #f03030; }
.gr { color: #109010; }
.ratio { height: 28px; border: 2px solid #111; margin-right: 8px; }
.sh { width: 100px; background: linear-gradient(90deg, #f00 50%, #108000 50%); }
.sz { width: 129px; background: linear-gradient(90deg, #f00 50%, #108000 50%); }
.hs { width: 96px; background: linear-gradient(90deg, #f00 50%, #108000 50%); }
.cell { width: 40px; justify-content: center; flex: none; align-items: flex-start; padding-top: 3px; }
.cell svg { width: 24px; height: 24px; }
.live { width: 125px; justify-content: flex-start; padding: 3px 0 0 2px; gap: 4px; }
.live svg { width: 18px; }
.cell.clock { flex: 1; justify-content: flex-start; background: #f0f0f0; padding: 3px 0 0 1px; }
```
